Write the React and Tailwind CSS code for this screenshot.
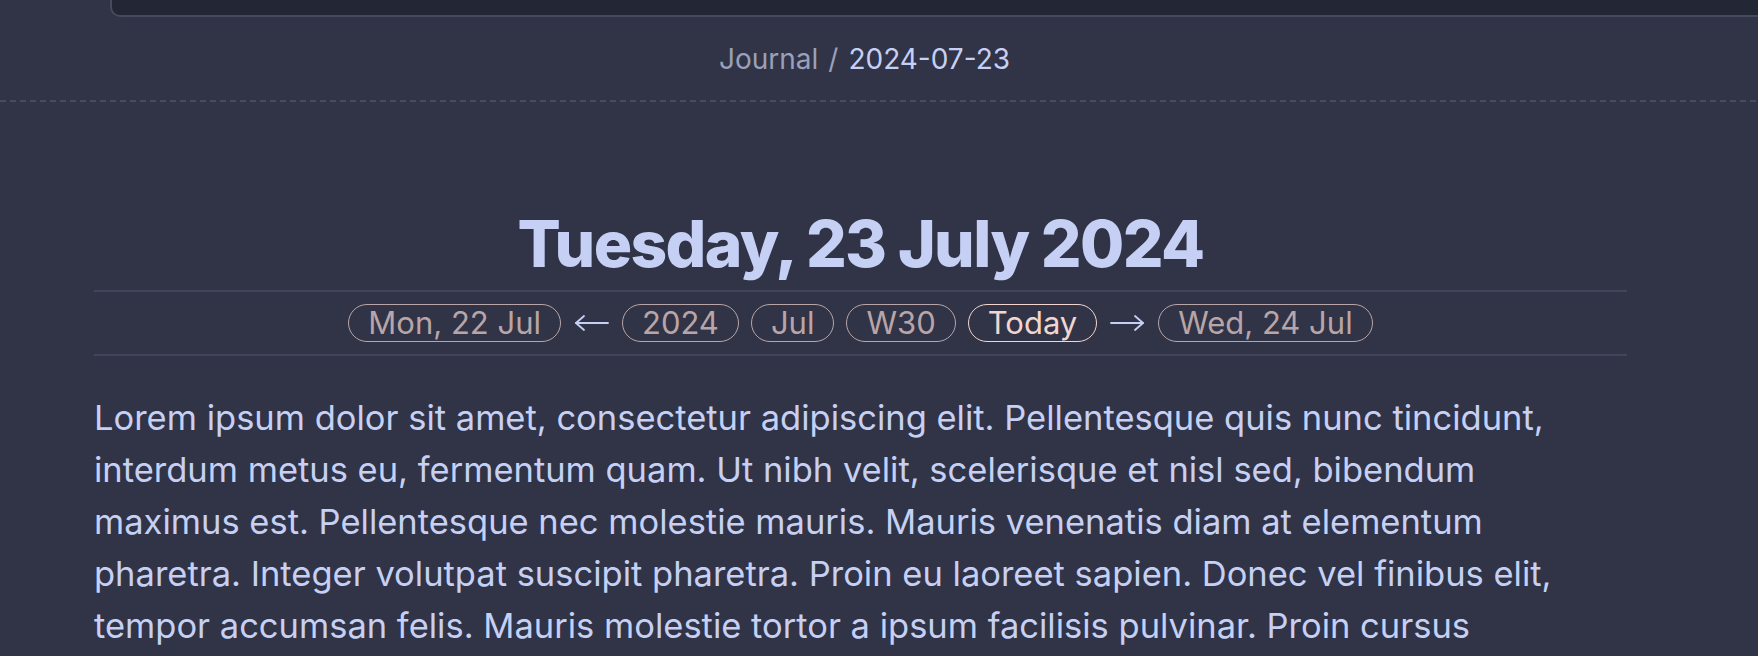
const nav = [
    { label: "Mon, 22 Jul" },
    { arrow: "left" },
    { label: "2024" },
    { label: "Jul" },
    { label: "W30" },
    { label: "Today", current: true },
    { arrow: "right" },
    { label: "Wed, 24 Jul" },
];

const text =
    "Lorem ipsum dolor sit amet, consectetur adipiscing elit. Pellentesque quis nunc tincidunt, interdum metus eu, fermentum quam. Ut nibh velit, scelerisque et nisl sed, bibendum maximus est. Pellentesque nec molestie mauris. Mauris venenatis diam at elementum pharetra. Integer volutpat suscipit pharetra. Proin eu laoreet sapien. Donec vel finibus elit, tempor accumsan felis. Mauris molestie tortor a ipsum facilisis pulvinar. Proin cursus consectetur lectus, nec viverra risus facilisis at. Nulla facilisi. Sed at nibh quis lacus posuere sodales.";

const Arrow = ({ dir }) => (
    <svg width="37" height="20" viewBox="0 0 37 20" fill="none" stroke="#c6d0f5" strokeWidth="1.8" strokeLinecap="round" strokeLinejoin="round">
        {dir === "left" ? (
            <>
                <path d="M3 10h32" />
                <path d="M11 3 3 10l8 7" />
            </>
        ) : (
            <>
                <path d="M2 10h32" />
                <path d="M26 3l8 7-8 7" />
            </>
        )}
    </svg>
);

const App = () => {
    return (
        <div className="h-[656px] overflow-hidden bg-[#303446] font-['Inter',sans-serif] text-[#c6d0f5]">
            {/* tab strip edge */}
            <div className="flex h-[17px]">
                <div className="w-[110px] shrink-0" />
                <div className="flex-1 rounded-bl-[10px] border-b-2 border-l-2 border-[#464a5f] bg-[#232634]" />
            </div>

            {/* breadcrumb */}
            <div className="ml-[94px] flex h-[83px] w-[1533px] items-center justify-center pl-[8px] text-[28px] leading-[34px]">
                <span className="text-[#9aa0ba]">Journal</span>
                <span className="mx-[10px] text-[#9aa0ba]">/</span>
                <span>2024-07-23</span>
            </div>
            <div className="h-[2px] bg-[repeating-linear-gradient(90deg,#474b60_0_6px,transparent_6px_10px)]" />

            <div className="ml-[94px] w-[1533px]">
                <h1 className="mt-[110px] text-center text-[64px] leading-none font-extrabold tracking-[-0.025em]">
                    Tuesday, 23 July 2024
                </h1>

                <div className="mt-[14px] flex h-[66px] items-center justify-center gap-[12px] border-y-2 border-[#414559]">
                    {nav.map((item, i) =>
                        item.arrow ? (
                            <Arrow key={i} dir={item.arrow} />
                        ) : (
                            <span
                                key={i}
                                className={
                                    item.current
                                        ? "flex h-[38px] items-center rounded-full border-[1.5px] border-[#f2d5cf] px-[19px] text-[31px] text-[#f2d5cf]"
                                        : "flex h-[38px] items-center rounded-full border-[1.5px] border-[#b9a5a7] px-[19px] text-[31px] text-[#b9a5a7]"
                                }
                            >
                                {item.label}
                            </span>
                        )
                    )}
                </div>

                <p className="mt-[36px] text-[34.5px] leading-[52px]">{text}</p>
            </div>
        </div>
    );
};

export default App;
